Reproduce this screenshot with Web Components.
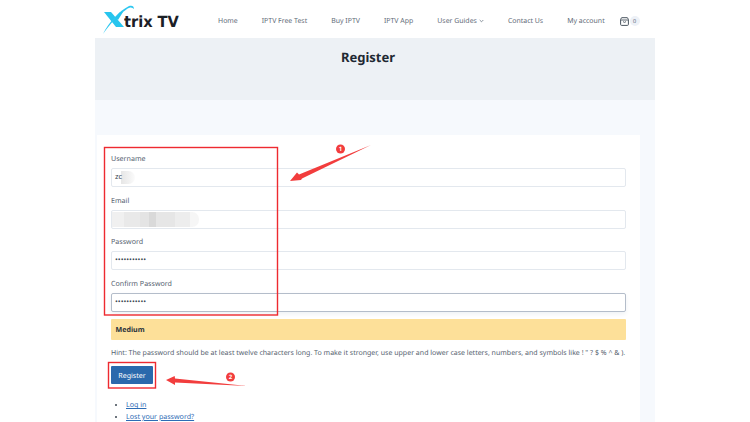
<!DOCTYPE html>
<html>
<head>
<meta charset="utf-8">
<title>Register</title>
<style>
html, body { margin:0; padding:0; background:#fff; overflow:hidden; }
body { width:750px; height:422px; font-family:"Noto Sans","Open Sans",sans-serif; text-rendering:geometricPrecision; color:#5d6a78; position:relative; }
</style>
</head>
<body>
<site-page>
  <site-header></site-header>
  <page-title>Register</page-title>
  <register-card>
    <form-field label="Username" value="zc" blur="username"></form-field>
    <form-field label="Email" blur="email"></form-field>
    <form-field label="Password" value="•••••••••••"></form-field>
    <form-field label="Confirm Password" value="•••••••••••" focused></form-field>
    <strength-meter>Medium</strength-meter>
    <p slot="hint">Hint: The password should be at least twelve characters long. To make it stronger, use upper and lower case letters, numbers, and symbols like ! " ? $ % ^ &amp; ).</p>
    <reg-button slot="button">Register</reg-button>
    <a slot="link">Log in</a>
    <a slot="link">Lost your password?</a>
  </register-card>
</site-page>
<mark-up></mark-up>

<script>
class SitePage extends HTMLElement {
  constructor() {
    super();
    this.attachShadow({mode:'open'});
    this.shadowRoot.innerHTML = `
<style>
:host { display:block; width:560px; height:422px; margin-left:95px; background:#f6f9fd; overflow:hidden; }
</style>
<slot></slot>`;
  }
}

class SiteHeader extends HTMLElement {
  constructor() {
    super();
    this.attachShadow({mode:'open'});
    this.shadowRoot.innerHTML = `
<style>
:host { display:flex; align-items:center; height:38px; background:#fff; font-size:6.95px; color:#5f6b78; }
.logo { position:relative; width:90px; height:38px; flex:none; margin-left:8px; }
.logo svg { position:absolute; left:0; top:3px; }
.logo b { position:absolute; left:21px; top:11px; font:700 15.5px/22px "DejaVu Sans",sans-serif; color:#1b2026; white-space:nowrap; transform:scaleX(.94); transform-origin:left; }
nav { display:flex; margin-left:25px; gap:24px; align-items:center; white-space:nowrap; padding-top:4px; }
nav svg { margin-left:2px; }
.cart { display:flex; align-items:center; gap:1px; margin-left:15px; padding-top:4px; }
.count { width:10px; height:10px; border-radius:50%; background:#edf1f7; font-size:5.5px; line-height:10px; text-align:center; }
</style>
<div class="logo">
  <svg width="36" height="32" viewBox="0 0 36 32">
    <path d="M1 9 H8 L21 24 H13 Z" fill="#27c5ee"/>
    <path d="M0 31 C6 19 16 8 26 3 C29 2 31 3 31 6 C29 4 27 4 24 6 C15 12 7 21 0 31 Z" fill="#2ec7f0"/>
    <path d="M12 15 L17 9 H20 L15 17 Z" fill="#27c5ee"/>
  </svg>
  <b>trix TV</b>
</div>
<nav>
  <span>Home</span><span>IPTV Free Test</span><span>Buy IPTV</span><span>IPTV App</span>
  <span>User Guides<svg width="5" height="4" viewBox="0 0 5 4"><path d="M.7 1 L2.5 2.8 L4.3 1" fill="none" stroke="#6b7683" stroke-width=".8"/></svg></span>
  <span>Contact Us</span><span>My account</span>
</nav>
<div class="cart">
  <svg width="9" height="9" viewBox="0 0 9 9"><path d="M1.6 .7 H7.4 L8.4 2.4 V7.4 Q8.4 8.4 7.4 8.4 H1.6 Q.6 8.4 .6 7.4 V2.4 Z" fill="none" stroke="#4a5560" stroke-width="1"/><path d="M.8 3 H8.2 M3 4.6 Q4.5 6.2 6 4.6" fill="none" stroke="#4a5560" stroke-width=".9"/></svg>
  <span class="count">0</span>
</div>`;
  }
}

class PageTitle extends HTMLElement {
  constructor() {
    super();
    this.attachShadow({mode:'open'});
    this.shadowRoot.innerHTML = `
<style>
:host { display:block; height:62px; background:#edf1f5; text-align:center; font-size:13px; font-weight:700; color:#1f2933; line-height:20px; }
div { padding:9px 14px 0 0; }
</style>
<div><slot></slot></div>`;
  }
}

class RegisterCard extends HTMLElement {
  constructor() {
    super();
    this.attachShadow({mode:'open'});
    this.shadowRoot.innerHTML = `
<style>
:host { display:block; width:515px; margin:35px 0 0 2px; padding:18px 14px 0 14px; background:#fff; height:300px; }
.fields { display:flex; flex-direction:column; gap:7.6px; }
::slotted(p) { margin:7px 0 0; font-size:7.02px; line-height:12px; white-space:nowrap; color:#56626f; }
.btn { display:flex; margin-top:7px; }
ul { margin:16px 0 0; padding-left:15px; font-size:7.1px; line-height:11.4px; color:#2d6cb5; }
li::marker { color:#3d4752; }
</style>
<div class="fields"><slot></slot></div>
<slot name="hint"></slot>
<div class="btn"><slot name="button"></slot></div>
<ul id="links"></ul>`;
  }
  connectedCallback() {
    // the links go in as list items, one slot each
    const ul = this.shadowRoot.querySelector('#links');
    [...this.querySelectorAll('a')].forEach((a, i) => {
      a.slot = 'link' + i;
      a.style.textDecoration = 'underline';
      const li = document.createElement('li');
      li.innerHTML = `<slot name="link${i}"></slot>`;
      ul.appendChild(li);
    });
  }
}

class FormField extends HTMLElement {
  constructor() {
    super();
    this.attachShadow({mode:'open'});
    const focused = this.hasAttribute('focused');
    const blur = this.getAttribute('blur');
    let smudge = '';
    if (blur === 'username') smudge = '<i style="left:9px;top:2px;width:14px;height:13px;background:linear-gradient(90deg,#e6e6e6,#f2f2f2 60%,#fbfbfb);border-radius:0 7px 7px 0"></i>';
    if (blur === 'email') smudge = '<i style="left:0;top:1px;width:87px;height:15px;background:linear-gradient(90deg,#f0f0f0 0 14%,#e9e9e9 14% 32%,#e4e4e4 32% 42%,#d9d9d9 42% 50%,#e6e6e6 50% 72%,#ededed 72% 90%,#f6f6f6 90%);border-radius:0 7px 7px 0"></i>';
    this.shadowRoot.innerHTML = `
<style>
:host { display:block; font-size:7.1px; color:#56626f; }
label { display:block; line-height:11px; padding-top:1px; margin-bottom:3px; }
.box { position:relative; box-sizing:border-box; height:19px; border:1px solid ${focused ? '#b4bdca' : '#e3e8ee'}; border-radius:2px; background:#fff; padding:0 3px; font-size:7.5px; line-height:17px; color:#3d4752; ${focused ? 'box-shadow:0 2px 5px #eef1f5;' : ''} }
i { position:absolute; display:block; }
span { position:relative; }
</style>
<label>${this.getAttribute('label')}</label>
<div class="box">${smudge}<span>${this.getAttribute('value') || ''}</span></div>`;
  }
}

class StrengthMeter extends HTMLElement {
  constructor() {
    super();
    this.attachShadow({mode:'open'});
    this.shadowRoot.innerHTML = `
<style>
:host { display:block; height:21px; background:#fde099; border-radius:1px; font-size:7.1px; font-weight:700; color:#26303a; line-height:23px; padding-left:4.5px; }
</style>
<slot></slot>`;
  }
}

class RegButton extends HTMLElement {
  constructor() {
    super();
    this.attachShadow({mode:'open'});
    this.shadowRoot.innerHTML = `
<style>
:host { display:block; width:42px; height:18px; background:#2a69ac; border-radius:1px; color:#fff; font-size:7.1px; line-height:20px; text-align:center; }
</style>
<slot></slot>`;
  }
}

// the red annotations drawn over the screenshot
class MarkUp extends HTMLElement {
  constructor() {
    super();
    this.attachShadow({mode:'open'});
    this.shadowRoot.innerHTML = `
<style>
:host { position:absolute; left:0; top:0; width:750px; height:422px; pointer-events:none; }
svg { position:absolute; left:0; top:0; }
text { font:700 6px "Open Sans",sans-serif; fill:#fff; text-anchor:middle; }
</style>
<svg width="750" height="422" viewBox="0 0 750 422">
  <g fill="none" stroke="#ee2a30" stroke-width="1.4">
    <rect x="104.5" y="147.5" width="173" height="167.5"/>
    <rect x="108.5" y="362.5" width="47" height="25.5"/>
  </g>
  <g fill="#f23d3d">
    <path d="M371 145 L302 178.5 L301 180 L290 181 L297 172.5 L299 174.5 Z"/>
    <path d="M247 386 L175 382.5 L175 385 L166 380 L174.7 376 L175 378.5 Z"/>
    <circle cx="340.5" cy="149" r="4.5"/>
    <circle cx="230.5" cy="377" r="4.5"/>
  </g>
  <text x="340.5" y="151.2">1</text>
  <text x="230.5" y="379.2">2</text>
</svg>`;
  }
}

customElements.define('site-page', SitePage);
customElements.define('site-header', SiteHeader);
customElements.define('page-title', PageTitle);
customElements.define('register-card', RegisterCard);
customElements.define('form-field', FormField);
customElements.define('strength-meter', StrengthMeter);
customElements.define('reg-button', RegButton);
customElements.define('mark-up', MarkUp);
</script>
</body>
</html>
